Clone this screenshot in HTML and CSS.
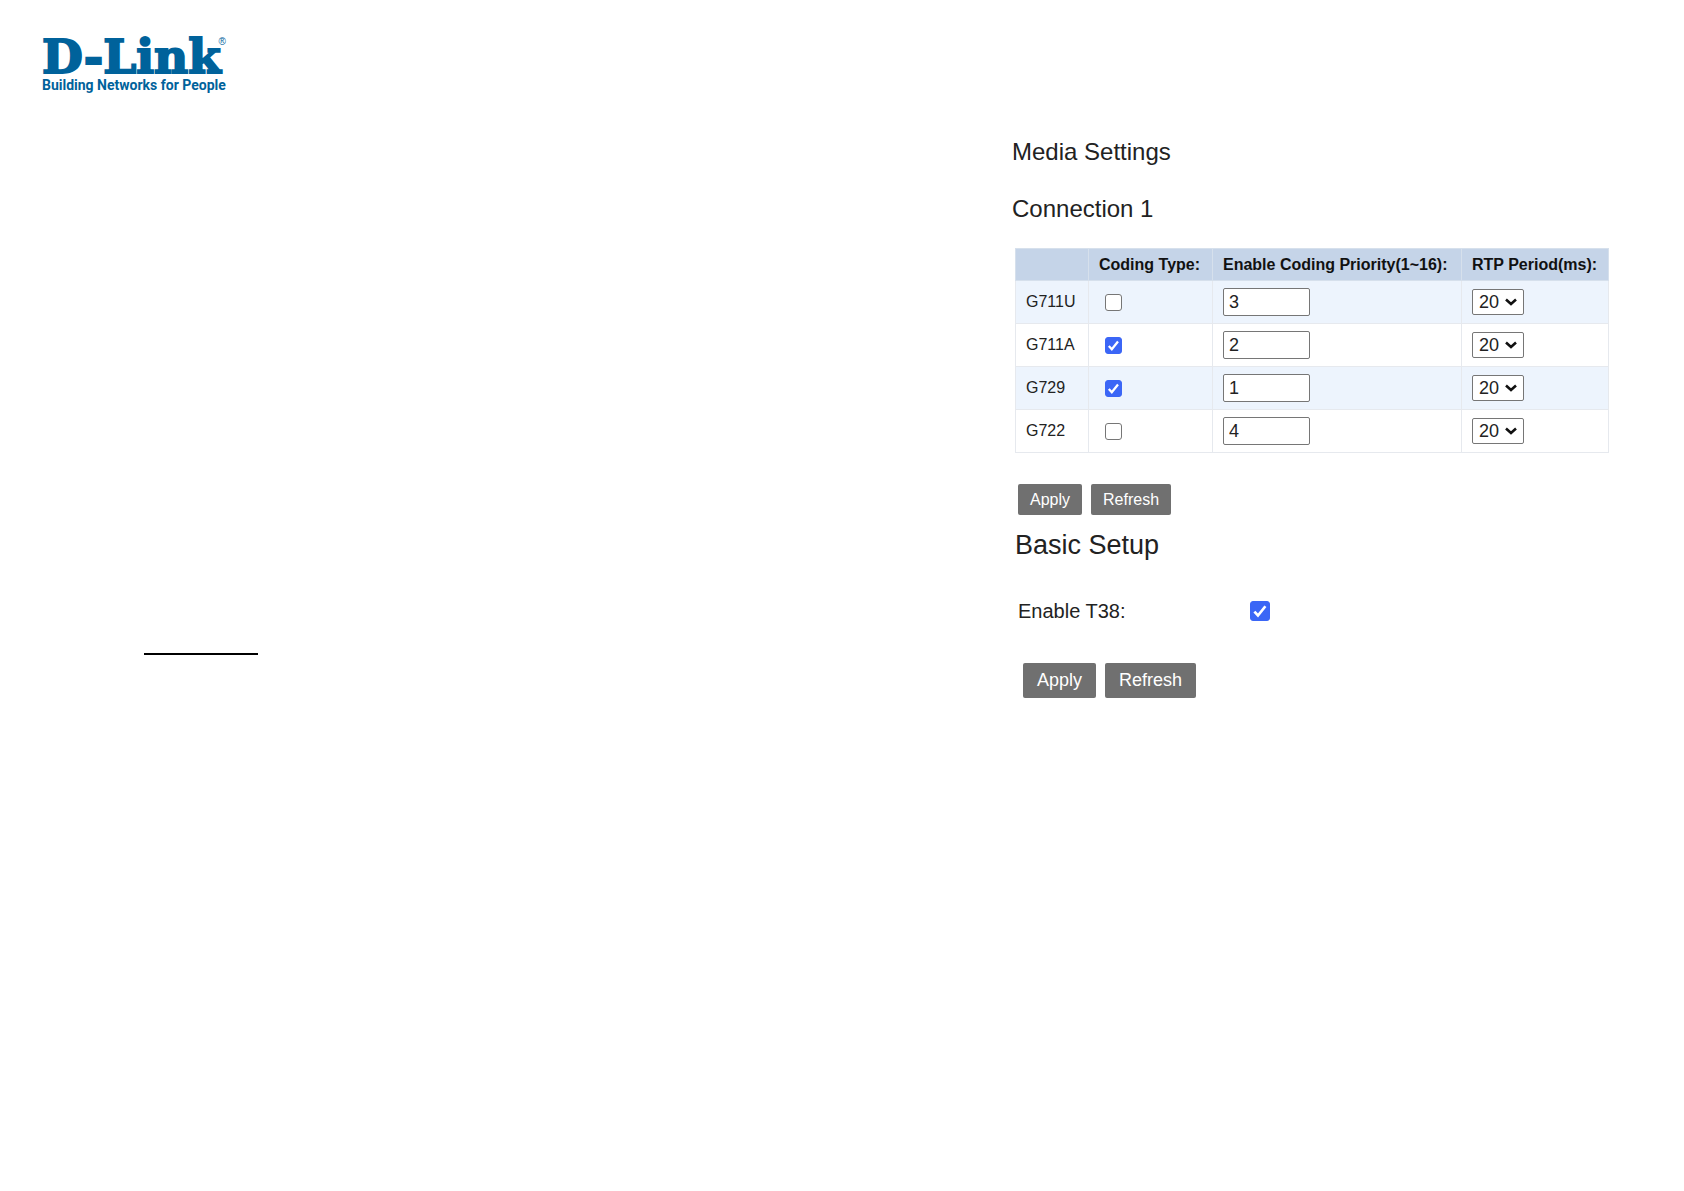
FILE: index.html
```html
<!DOCTYPE html>
<html lang="en">
<head>
    <meta charset="UTF-8">
    <meta name="viewport" content="width=device-width, initial-scale=1.0">
    <title>Media Settings</title>
    <link rel="stylesheet" href="styles.css">
</head>
<body>
    <header class="header">
        <a href="#media" class="logo">
            <span class="logo-name">D-Link</span>
            <span class="logo-mark">®</span>
            <span class="logo-tagline">Building Networks for People</span>
        </a>
    </header>

    <main class="page">
        <div class="side">
            <hr class="side-line">
        </div>

        <div class="content">
            <form class="media" id="media">
                <h2>Media Settings</h2>
                <h2>Connection 1</h2>
                <table class="codecs">
                    <thead>
                        <tr>
                            <th class="col-name"></th>
                            <th class="col-type">Coding Type:</th>
                            <th class="col-priority">Enable Coding Priority(1~16):</th>
                            <th class="col-period">RTP Period(ms):</th>
                        </tr>
                    </thead>
                    <tbody>
                        <tr>
                            <td>G711U</td>
                            <td><input type="checkbox" class="check" aria-label="G711U coding type"></td>
                            <td><input type="text" class="priority" value="3" aria-label="G711U priority"></td>
                            <td><select class="period" aria-label="G711U RTP period"><option>20</option></select></td>
                        </tr>
                        <tr>
                            <td>G711A</td>
                            <td><input type="checkbox" class="check" aria-label="G711A coding type" checked></td>
                            <td><input type="text" class="priority" value="2" aria-label="G711A priority"></td>
                            <td><select class="period" aria-label="G711A RTP period"><option>20</option></select></td>
                        </tr>
                        <tr>
                            <td>G729</td>
                            <td><input type="checkbox" class="check" aria-label="G729 coding type" checked></td>
                            <td><input type="text" class="priority" value="1" aria-label="G729 priority"></td>
                            <td><select class="period" aria-label="G729 RTP period"><option>20</option></select></td>
                        </tr>
                        <tr>
                            <td>G722</td>
                            <td><input type="checkbox" class="check" aria-label="G722 coding type"></td>
                            <td><input type="text" class="priority" value="4" aria-label="G722 priority"></td>
                            <td><select class="period" aria-label="G722 RTP period"><option>20</option></select></td>
                        </tr>
                    </tbody>
                </table>
                <div class="buttons">
                    <button type="button">Apply</button>
                    <button type="button">Refresh</button>
                </div>
            </form>

            <form class="basic">
                <h2>Basic Setup</h2>
                <div class="field">
                    <label for="t38">Enable T38:</label>
                    <input type="checkbox" class="check" id="t38" checked>
                </div>
                <div class="buttons">
                    <button type="button">Apply</button>
                    <button type="button">Refresh</button>
                </div>
            </form>
        </div>
    </main>
</body>
</html>
```
FILE: styles.css
```css
* {
    margin: 0;
    padding: 0;
    box-sizing: border-box;
}
body {
    font-family: "Liberation Sans", Arial, sans-serif;
    font-size: 16px;
    color: #222;
    background: #fff;
}
.header {
    display: flex;
    padding: 37px 42px 0;
}
.logo {
    position: relative;
    display: flex;
    flex-direction: column;
    color: #00629b;
    text-decoration: none;
    white-space: nowrap;
}
.logo-name {
    font-family: "DejaVu Serif", serif;
    font-size: 47px;
    font-weight: bold;
    line-height: 40px;
    -webkit-text-stroke: 2px #00629b;
}
.logo-mark {
    position: absolute;
    top: 0;
    right: 0;
    font-size: 10px;
    line-height: 10px;
}
.logo-tagline {
    font-family: Roboto, sans-serif;
    font-size: 14px;
    font-weight: bold;
    line-height: 16px;
}

/* Page columns */
.page {
    display: grid;
    grid-template-columns: 1fr 597px;
    padding: 45px 75px 40px 0;
}
.side {
    padding: 515px 0 0 144px;
}
.side-line {
    width: 114px;
    height: 2px;
    border: 0;
    background: #000;
}
h2 {
    font-size: 24px;
    font-weight: normal;
    line-height: 28px;
}
.media h2 {
    margin-bottom: 29px;
}
.media h2 + h2 {
    margin-bottom: 25px;
}

/* Codec table */
.codecs {
    width: calc(100% - 3px);
    margin-left: 3px;
    border-collapse: collapse;
    table-layout: fixed;
}
.codecs th {
    height: 32px;
    padding-left: 10px;
    background: #c5d4e8;
    border: 1px solid #d6e0ec;
    text-align: left;
    white-space: nowrap;
    color: #111;
}
.codecs td {
    height: 43px;
    padding-left: 10px;
    border: 1px solid #e6e9ee;
    vertical-align: middle;
}
.codecs tbody tr:nth-child(odd) {
    background: #edf4fd;
}
.col-name {
    width: 73px;
}
.col-type {
    width: 124px;
}
.col-priority {
    width: 249px;
}
.codecs input,
.codecs select {
    display: block;
}

/* Controls */
.check {
    appearance: none;
    width: 17px;
    height: 17px;
    border: 1px solid #767676;
    border-radius: 3px;
    background: #fff;
}
.check:checked {
    border-color: #3b66f6;
    background: #3b66f6 url("data:image/svg+xml,%3Csvg xmlns='http://www.w3.org/2000/svg' viewBox='0 0 16 16'%3E%3Cpath d='M3 8.5l3.2 3.5L12.8 3.8' fill='none' stroke='white' stroke-width='2.4'/%3E%3C/svg%3E") center / 100% no-repeat;
}
.codecs .check {
    margin-left: 6px;
}
.priority {
    width: 87px;
    height: 28px;
    padding: 0 5px;
    border: 1px solid #767676;
    border-radius: 2px;
    font-family: inherit;
    font-size: 18px;
    color: #222;
}
.period {
    appearance: none;
    width: 52px;
    height: 26px;
    padding-left: 6px;
    border: 1px solid #767676;
    border-radius: 2px;
    background: #fff url("data:image/svg+xml,%3Csvg xmlns='http://www.w3.org/2000/svg' width='14' height='10' viewBox='0 0 14 10'%3E%3Cpath d='M2 2.5l5 4.5 5-4.5' fill='none' stroke='%23111' stroke-width='2.6'/%3E%3C/svg%3E") right 5px center no-repeat;
    font-family: inherit;
    font-size: 18px;
    color: #222;
}
.buttons {
    display: flex;
    gap: 9px;
}
.buttons button {
    height: 31px;
    padding: 0 12px;
    border: 0;
    border-radius: 2px;
    background: #707070;
    color: #fff;
    font-family: inherit;
    font-size: 16px;
}
.media .buttons {
    margin: 31px 0 0 6px;
}

/* Basic setup */
.basic {
    margin: 14px 0 0 3px;
}
.basic h2 {
    font-size: 27px;
    line-height: 32px;
}
.field {
    display: flex;
    align-items: center;
    margin-top: 38px;
    padding-left: 3px;
    font-size: 20px;
    line-height: 24px;
}
.field label {
    width: 232px;
}
.field .check {
    width: 20px;
    height: 20px;
}
.basic .buttons {
    margin: 40px 0 0 8px;
}
.basic .buttons button {
    height: 35px;
    padding: 0 14px;
    font-size: 18px;
}
```
